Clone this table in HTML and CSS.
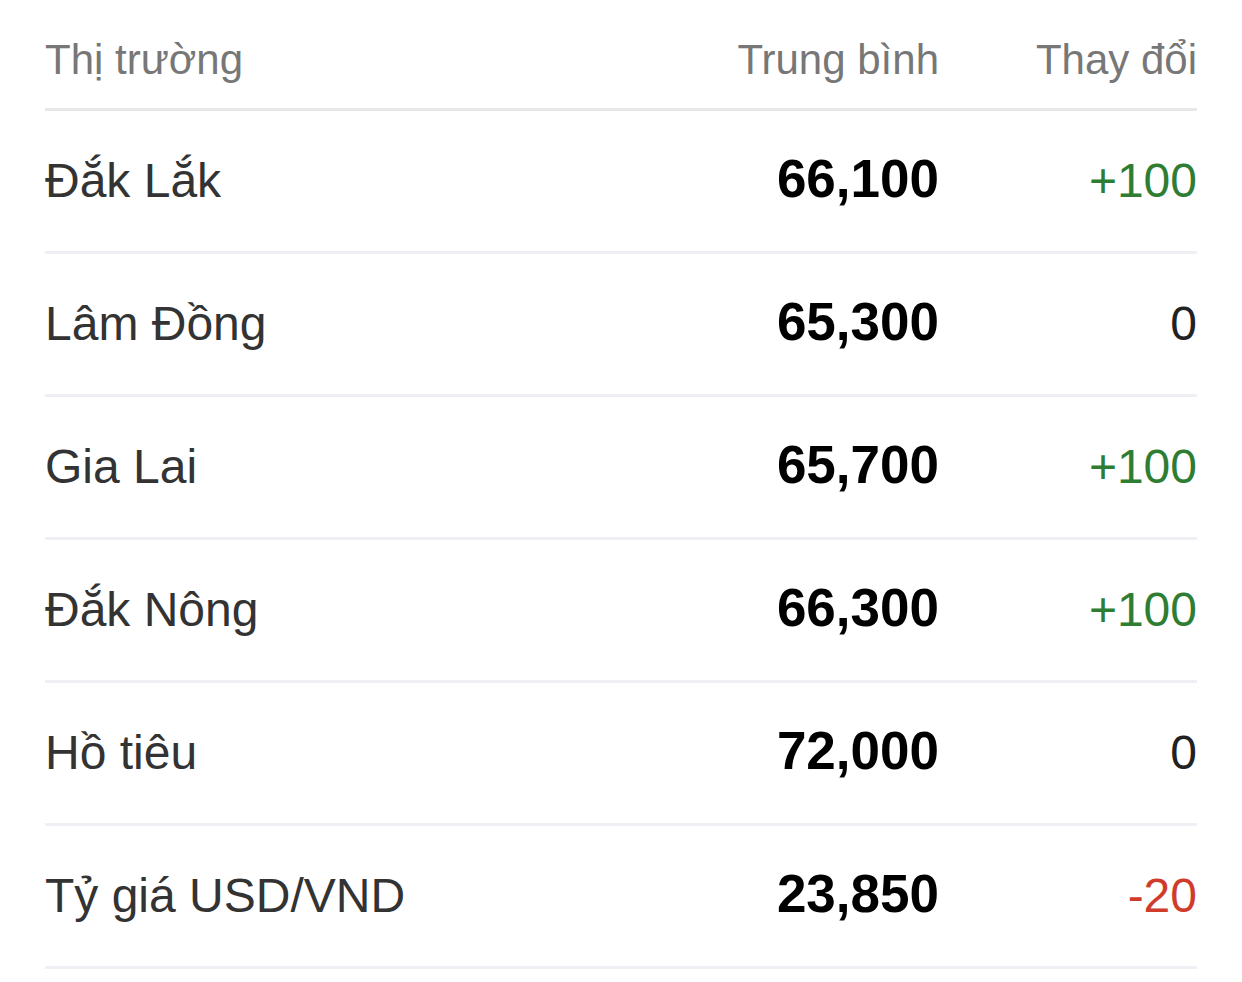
FILE: index.html
```html
<!DOCTYPE html>
<html lang="vi">
<head>
<meta charset="utf-8">
<title>Giá cà phê</title>
<link rel="stylesheet" href="styles.css">
</head>
<body>
<div class="table">
  <div class="row head">
    <div class="c-name">Thị trường</div>
    <div class="c-val">Trung bình</div>
    <div class="c-chg">Thay đổi</div>
  </div>
  <div class="row">
    <div class="c-name name">Đắk Lắk</div>
    <div class="c-val val">66,100</div>
    <div class="c-chg up">+100</div>
  </div>
  <div class="row">
    <div class="c-name name">Lâm Đồng</div>
    <div class="c-val val">65,300</div>
    <div class="c-chg flat">0</div>
  </div>
  <div class="row">
    <div class="c-name name">Gia Lai</div>
    <div class="c-val val">65,700</div>
    <div class="c-chg up">+100</div>
  </div>
  <div class="row">
    <div class="c-name name">Đắk Nông</div>
    <div class="c-val val">66,300</div>
    <div class="c-chg up">+100</div>
  </div>
  <div class="row">
    <div class="c-name name">Hồ tiêu</div>
    <div class="c-val val">72,000</div>
    <div class="c-chg flat">0</div>
  </div>
  <div class="row">
    <div class="c-name name">Tỷ giá USD/VND</div>
    <div class="c-val val">23,850</div>
    <div class="c-chg down">-20</div>
  </div>
</div>
</body>
</html>
```

FILE: styles.css
```css
html, body {
  margin: 0;
  padding: 0;
  background: #ffffff;
}
body {
  font-family: "Liberation Sans", Arial, sans-serif;
  padding: 0 45px;
}
.table {
  display: flex;
  flex-direction: column;
}
.row {
  display: grid;
  grid-template-columns: 592px 302px 258px;
  align-items: center;
  height: 140px;
  border-bottom: 3px solid #efeff4;
  line-height: 1;
}
.row.head {
  height: 97px;
  padding-top: 11px;
  border-bottom-color: #e8e8e8;
  font-size: 42px;
  color: #777777;
}
.c-name {
  text-align: left;
}
.c-val, .c-chg {
  text-align: right;
}
.name {
  font-size: 48px;
  color: #333333;
}
.val {
  font-size: 53px;
  font-weight: bold;
  color: #000000;
  margin-bottom: 5px;
}
.up, .flat, .down {
  font-size: 48px;
}
.up { color: #2e7d32; }
.flat { color: #222222; }
.down { color: #d03c2c; }
```
